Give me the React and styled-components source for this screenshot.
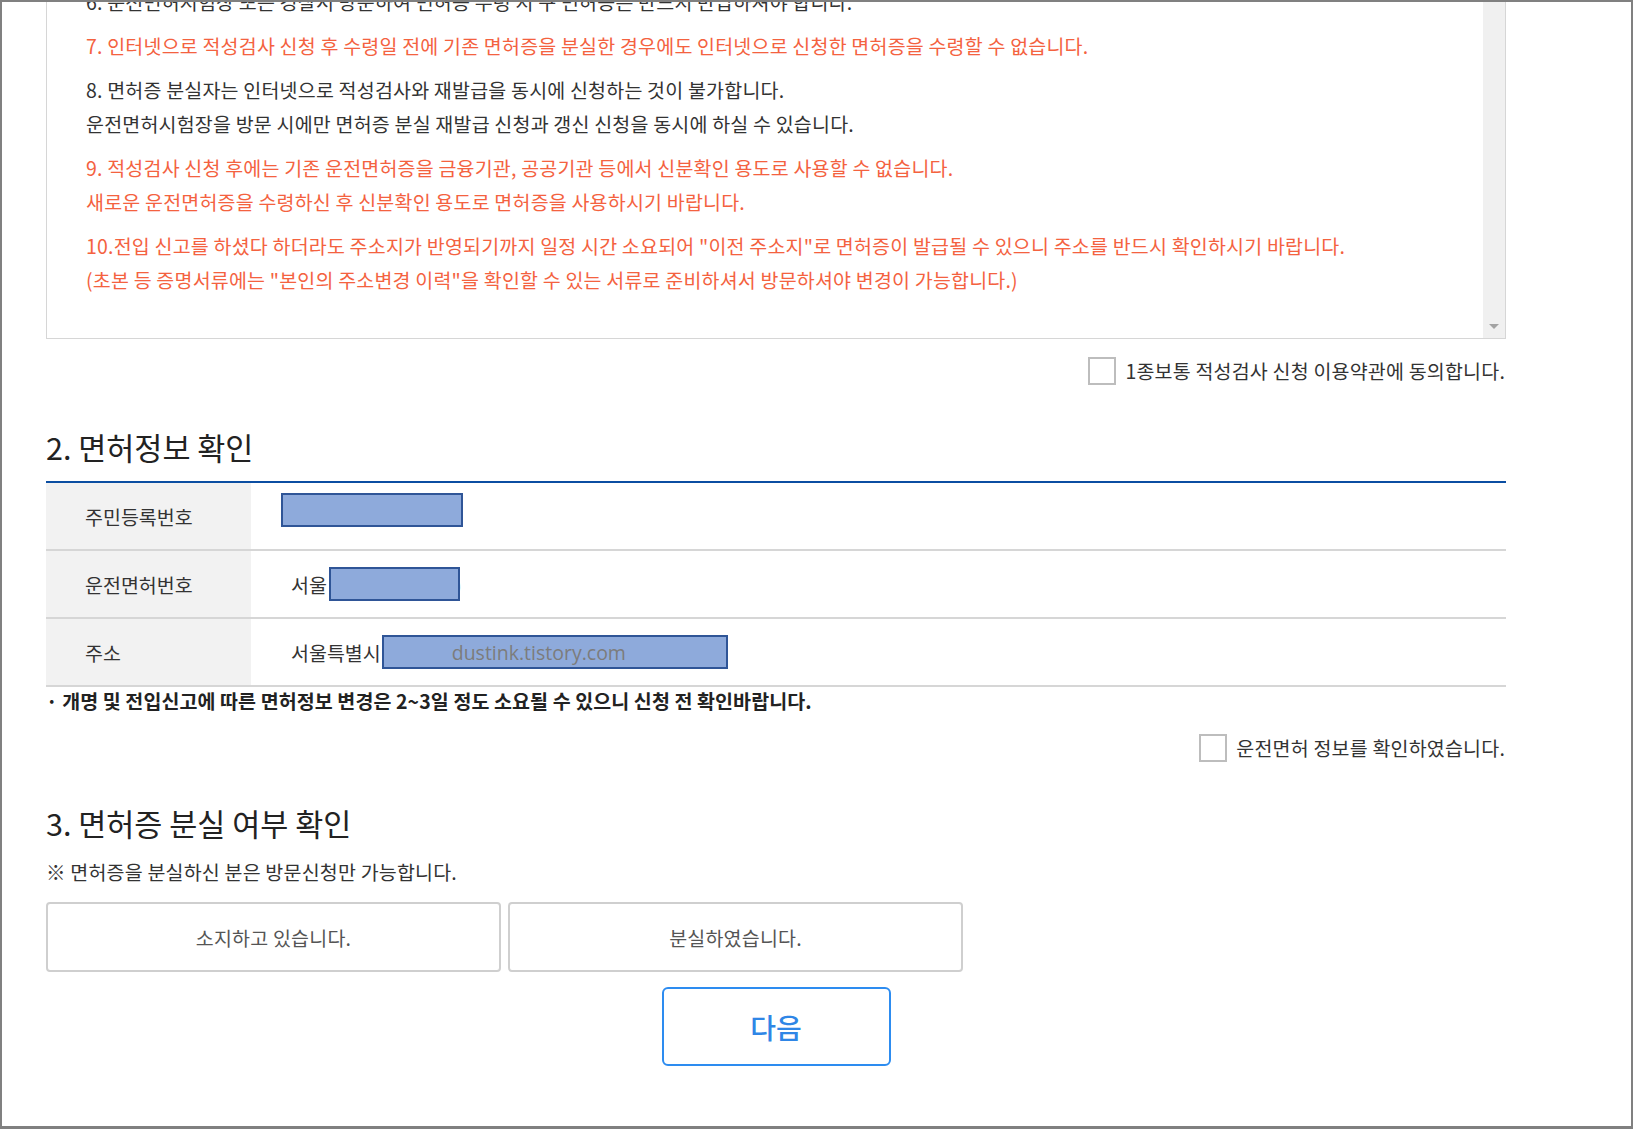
import React from "react";
import styled, { createGlobalStyle } from "styled-components";

const GlobalStyle = createGlobalStyle`
   html, body {
      margin: 0;
      padding: 0;
      background: #fff;
   }
   body {
      font-family: "Noto Sans CJK KR", "Noto Sans", sans-serif;
      color: #333;
   }
   * {
      box-sizing: border-box;
   }
`;

const Frame = styled.div`
   width: 1633px;
   height: 1129px;
   border: 2px solid #808080;
   border-bottom-width: 3px;
   overflow: hidden;
   background: #fff;
`;

const Content = styled.div`
   width: 1460px;
   margin-left: 44px;
   margin-top: -38px;
   display: flex;
   flex-direction: column;
`;

const TermsBox = styled.div`
   display: flex;
   border: 1px solid #d6d6d6;
   height: 375px;
`;

const TermsText = styled.div`
   flex: 1;
   padding: 20px 0 0 39px;
   font-size: 19.5px;
   letter-spacing: 0.2px;
   line-height: 34px;
   display: flex;
   flex-direction: column;
   gap: 10px;
`;

const Para = styled.p`
   margin: 0;
   white-space: nowrap;
   color: ${(p) => (p.$warn ? "#f4623f" : "#333")};
`;

const ScrollTrack = styled.div`
   width: 22px;
   background: #f0f0f0;
   display: flex;
   align-items: flex-end;
   justify-content: center;
   padding-bottom: 9px;
`;

const DownArrow = styled.span`
   width: 0;
   height: 0;
   border-left: 5px solid transparent;
   border-right: 5px solid transparent;
   border-top: 5px solid #a3a3a3;
`;

const AgreeRow = styled.label`
   display: flex;
   justify-content: flex-end;
   align-items: center;
   gap: 9px;
   font-size: 19.5px;
   letter-spacing: 0.2px;
   color: #333;
   margin-top: ${(p) => p.$top}px;
   padding-right: 1px;
`;

const CheckBox = styled.span`
   width: 28px;
   height: 28px;
   border: 2px solid #bdbdbd;
   background: #fff;
   display: inline-block;
`;

const SectionTitle = styled.h2`
   margin: ${(p) => p.$top}px 0 0;
   font-size: 30.5px;
   font-weight: 400;
   line-height: 40px;
   color: #222;
`;

const InfoTable = styled.div`
   margin-top: 14px;
   border-top: 2px solid #0b4ea2;
   display: flex;
   flex-direction: column;
`;

const InfoRow = styled.div`
   display: flex;
   height: 68px;
   border-bottom: 2px solid #d6d6d6;
`;

const InfoLabel = styled.div`
   width: 205px;
   background: #f2f2f2;
   padding-left: 39px;
   display: flex;
   align-items: center;
   font-size: 19.5px;
   color: #333;
`;

const InfoValue = styled.div`
   flex: 1;
   padding-left: 40px;
   display: flex;
   align-items: ${(p) => (p.$top ? "flex-start" : "center")};
   padding-top: ${(p) => (p.$top ? "10px" : "0")};
   font-size: 19.5px;
   color: #333;
`;

const Redact = styled.span`
   position: relative;
   z-index: 1;
   display: inline-flex;
   align-items: center;
   width: ${(p) => p.$w}px;
   height: 34px;
   margin-left: ${(p) => p.$ml || 0}px;
   background: #8eaadb;
   border: 2px solid #2f5597;
   padding-left: ${(p) => p.$pl || 0}px;
   font-family: "Open Sans", "Noto Sans", sans-serif;
   font-size: 19.5px;
   color: #7c7c7c;
`;

const Paren = styled.span`
   margin-left: -5px;
   color: #333;
`;

const InfoNote = styled.p`
   margin: 2px 0 0;
   font-size: 19.5px;
   font-weight: 700;
   letter-spacing: 0.1px;
   line-height: 24px;
   color: #222;
`;

const LossNote = styled.p`
   margin: 17px 0 0;
   font-size: 19.5px;
   letter-spacing: 0.2px;
   line-height: 24px;
   color: #333;
`;

const ChoiceRow = styled.div`
   display: flex;
   gap: 7px;
   margin-top: 18px;
`;

const ChoiceButton = styled.button`
   width: 455px;
   height: 70px;
   border: 2px solid #cfcfcf;
   border-radius: 4px;
   background: #fff;
   font-family: inherit;
   font-size: 19.5px;
   letter-spacing: 0.2px;
   color: #555;
   cursor: pointer;
`;

const NextWrap = styled.div`
   display: flex;
   justify-content: center;
   margin-top: 15px;
`;

const NextButton = styled.button`
   width: 229px;
   height: 79px;
   border: 2px solid #2d8cf0;
   border-radius: 6px;
   background: #fff;
   font-family: inherit;
   font-size: 28px;
   font-weight: 500;
   color: #2f86e6;
   cursor: pointer;
`;

const terms = [
   { lines: ["6. 운전면허시험장 또는 경찰서 방문하여 면허증 수령 시 구 면허증은 반드시 반납하셔야 합니다."] },
   {
      warn: true,
      lines: ["7. 인터넷으로 적성검사 신청 후 수령일 전에 기존 면허증을 분실한 경우에도 인터넷으로 신청한 면허증을 수령할 수 없습니다."],
   },
   {
      lines: [
         "8. 면허증 분실자는 인터넷으로 적성검사와 재발급을 동시에 신청하는 것이 불가합니다.",
         "운전면허시험장을 방문 시에만 면허증 분실 재발급 신청과 갱신 신청을 동시에 하실 수 있습니다.",
      ],
   },
   {
      warn: true,
      lines: [
         "9. 적성검사 신청 후에는 기존 운전면허증을 금융기관, 공공기관 등에서 신분확인 용도로 사용할 수 없습니다.",
         "새로운 운전면허증을 수령하신 후 신분확인 용도로 면허증을 사용하시기 바랍니다.",
      ],
   },
   {
      warn: true,
      lines: [
         '10.전입 신고를 하셨다 하더라도 주소지가 반영되기까지 일정 시간 소요되어 "이전 주소지"로 면허증이 발급될 수 있으니 주소를 반드시 확인하시기 바랍니다.',
         '(초본 등 증명서류에는 "본인의 주소변경 이력"을 확인할 수 있는 서류로 준비하셔서 방문하셔야 변경이 가능합니다.)',
      ],
   },
];

function App() {
   return (
      <>
         <GlobalStyle />
         <Frame>
            <Content>
               <TermsBox>
                  <TermsText>
                     {terms.map((t, i) => (
                        <Para key={i} $warn={t.warn}>
                           {t.lines.map((l, j) => (
                              <React.Fragment key={j}>
                                 {j > 0 && <br />}
                                 {l}
                              </React.Fragment>
                           ))}
                        </Para>
                     ))}
                  </TermsText>
                  <ScrollTrack>
                     <DownArrow />
                  </ScrollTrack>
               </TermsBox>

               <AgreeRow $top={17}>
                  <CheckBox />
                  1종보통 적성검사 신청 이용약관에 동의합니다.
               </AgreeRow>

               <SectionTitle $top={42}>2. 면허정보 확인</SectionTitle>
               <InfoTable>
                  <InfoRow>
                     <InfoLabel>주민등록번호</InfoLabel>
                     <InfoValue $top>
                        <Redact $w={182} $ml={-10} />
                     </InfoValue>
                  </InfoRow>
                  <InfoRow>
                     <InfoLabel>운전면허번호</InfoLabel>
                     <InfoValue>
                        서울
                        <Redact $w={131} $ml={2} />
                        <Paren>)</Paren>
                     </InfoValue>
                  </InfoRow>
                  <InfoRow>
                     <InfoLabel>주소</InfoLabel>
                     <InfoValue>
                        서울특별시
                        <Redact $w={346} $ml={1} $pl={68}>
                           dustink.tistory.com
                        </Redact>
                     </InfoValue>
                  </InfoRow>
               </InfoTable>
               <InfoNote>· 개명 및 전입신고에 따른 면허정보 변경은 2~3일 정도 소요될 수 있으니 신청 전 확인바랍니다.</InfoNote>

               <AgreeRow $top={20}>
                  <CheckBox />
                  운전면허 정보를 확인하였습니다.
               </AgreeRow>

               <SectionTitle $top={41}>3. 면허증 분실 여부 확인</SectionTitle>
               <LossNote>※ 면허증을 분실하신 분은 방문신청만 가능합니다.</LossNote>
               <ChoiceRow>
                  <ChoiceButton>소지하고 있습니다.</ChoiceButton>
                  <ChoiceButton>분실하였습니다.</ChoiceButton>
               </ChoiceRow>
               <NextWrap>
                  <NextButton>다음</NextButton>
               </NextWrap>
            </Content>
         </Frame>
      </>
   );
}

export default App;
